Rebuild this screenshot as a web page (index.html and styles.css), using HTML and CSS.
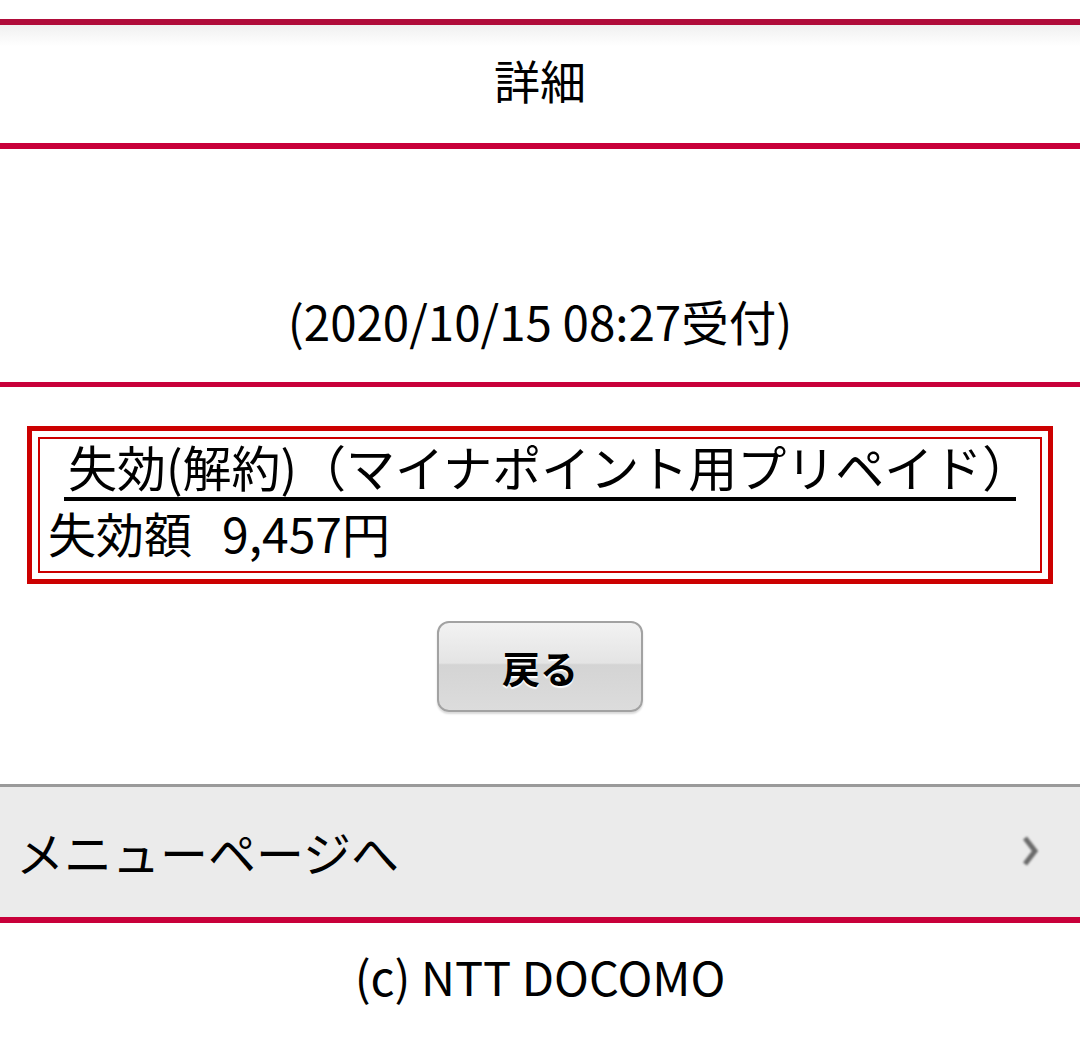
FILE: index.html
```html
<!DOCTYPE html>
<html lang="ja">
<head>
  <meta charset="UTF-8">
  <meta name="viewport" content="width=device-width, initial-scale=1.0">
  <title>詳細</title>
  <link rel="stylesheet" href="styles.css">
</head>
<body>
  <div class="page">
    <header class="title-bar">
      <h1>詳細</h1>
    </header>

    <section class="receipt">
      <p>(2020/10/15 08:27受付)</p>
    </section>

    <div class="detail-box">
      <div class="detail-inner">
        <h2 class="detail-title">失効(解約)（マイナポイント用プリペイド）</h2>
        <p class="detail-amount">失効額<span class="gap"></span>9,457円</p>
      </div>
    </div>

    <div class="actions">
      <button class="btn-back" type="button">戻る</button>
    </div>

    <a class="menu-link" href="#">
      <span>メニューページへ</span>
      <svg class="chevron" viewBox="0 0 16 30" aria-hidden="true">
        <path d="M3 2 L13 15 L3 28" />
      </svg>
    </a>

    <footer class="copyright">(c) NTT DOCOMO</footer>
  </div>
</body>
</html>
```

FILE: styles.css
```css
:root {
  --docomo-red: #c8003a; --box-red: #cc0000;
  --text: #000; --menu-bg: #ebebeb; --menu-line: #9a9a9a;
}

* { margin: 0; padding: 0; box-sizing: border-box; }

body {
  background: #fff; color: var(--text);
  font-family: "Noto Sans CJK JP", "Noto Sans", sans-serif;
  font-size: 48px; line-height: 1.3;
}

.page { padding-top: 19px; }

.title-bar {
  border-top: 6px solid #b00c3a; border-bottom: 6px solid var(--docomo-red);
  background: linear-gradient(#f0f0f0, #fff 18%);
  height: 130px; display: flex; align-items: center; justify-content: center;
  padding-bottom: 8px;
}
.title-bar h1 { font-size: 46px; font-weight: 400; }

.receipt {
  height: 238px; border-bottom: 5px solid var(--docomo-red);
  display: flex; align-items: flex-end; justify-content: center;
  padding-bottom: 30px;
}
.receipt p { font-size: 47.5px; }

.detail-box {
  margin: 39px 27px 0; border: 5px solid var(--box-red);
  padding: 6px;
}
.detail-inner {
  border: 2px solid var(--box-red); padding: 0 10px 8px 8px;
}
.detail-title {
  font-size: 49px; font-weight: 400; line-height: 54px; white-space: nowrap;
  margin: 0 14px 0 16px; padding: 0 0 4px 4px;
  border-bottom: 4px solid #000;
}
.detail-amount { font-size: 48px; line-height: 62px; }
.detail-amount .gap { display: inline-block; width: 30px; }

.actions { display: flex; justify-content: center; padding: 37px 0 72px; }

.btn-back {
  width: 206px; height: 91px; border: 2px solid #a2a2a2; border-radius: 12px;
  background: linear-gradient(#f2f2f2, #e4e4e4 46%, #d4d4d4 48%, #dcdcdc);
  box-shadow: 0 2px 2px rgba(0,0,0,0.15);
  font-family: inherit; font-size: 38px; font-weight: 700; color: #000;
  text-shadow: 0 2px 1px #fff;
}

.menu-link {
  display: flex; align-items: center; justify-content: space-between;
  height: 139px; padding: 0 42px 2px 16px;
  background: var(--menu-bg); color: #000; text-decoration: none;
  border-top: 3px solid var(--menu-line); border-bottom: 6px solid var(--docomo-red);
}
.menu-link span { font-size: 48px; }

.chevron {
  width: 16px; height: 30px; fill: none; stroke: #6a6a6a;
  stroke-width: 5; stroke-linejoin: miter; filter: blur(0.8px);
}

.copyright {
  text-align: center; font-size: 47px; padding-top: 22px;
}
```
